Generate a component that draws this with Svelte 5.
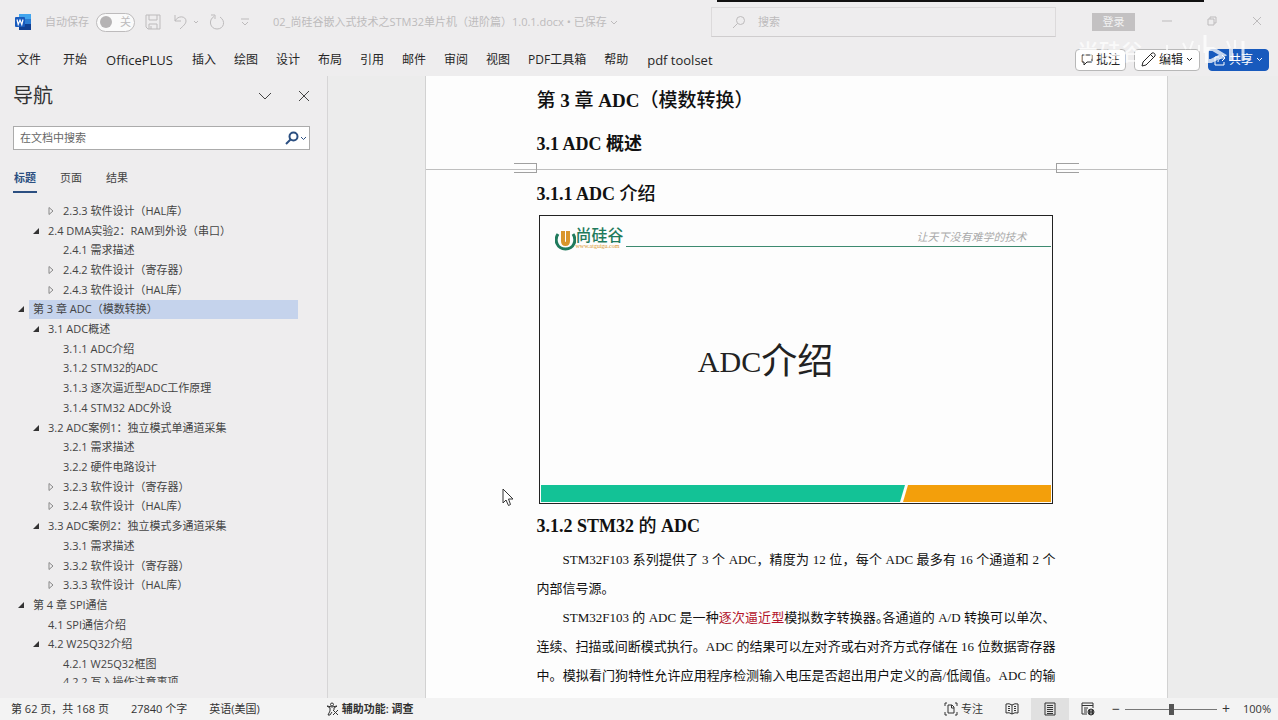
<script>
  let menus = ["开始", "OfficePLUS", "插入", "绘图", "设计", "布局", "引用", "邮件", "审阅", "视图", "PDF工具箱", "帮助", "pdf toolset"];
  let latin = ["OfficePLUS", "pdf toolset"];
  let tabs = ["标题", "页面", "结果"];
  let activeTab = "标题";
  let selected = "第 3 章 ADC（模数转换）";
  let autosave = false;
  let query = "";
  let find = "";
  let zoom = 50;

  // level is the depth in the outline, state is the arrow: open, shut or none
  let headings = [
    {level: 3, state: "shut", title: "2.3.3 软件设计（HAL库）"},
    {level: 2, state: "open", title: "2.4 DMA实验2：RAM到外设（串口）"},
    {level: 3, state: "", title: "2.4.1 需求描述"},
    {level: 3, state: "shut", title: "2.4.2 软件设计（寄存器）"},
    {level: 3, state: "shut", title: "2.4.3 软件设计（HAL库）"},
    {level: 1, state: "open", title: "第 3 章 ADC（模数转换）"},
    {level: 2, state: "open", title: "3.1 ADC概述"},
    {level: 3, state: "", title: "3.1.1 ADC介绍"},
    {level: 3, state: "", title: "3.1.2 STM32的ADC"},
    {level: 3, state: "", title: "3.1.3 逐次逼近型ADC工作原理"},
    {level: 3, state: "", title: "3.1.4 STM32 ADC外设"},
    {level: 2, state: "open", title: "3.2 ADC案例1：独立模式单通道采集"},
    {level: 3, state: "", title: "3.2.1 需求描述"},
    {level: 3, state: "", title: "3.2.2 硬件电路设计"},
    {level: 3, state: "shut", title: "3.2.3 软件设计（寄存器）"},
    {level: 3, state: "shut", title: "3.2.4 软件设计（HAL库）"},
    {level: 2, state: "open", title: "3.3 ADC案例2：独立模式多通道采集"},
    {level: 3, state: "", title: "3.3.1 需求描述"},
    {level: 3, state: "shut", title: "3.3.2 软件设计（寄存器）"},
    {level: 3, state: "shut", title: "3.3.3 软件设计（HAL库）"},
    {level: 1, state: "open", title: "第 4 章 SPI通信"},
    {level: 2, state: "", title: "4.1 SPI通信介绍"},
    {level: 2, state: "open", title: "4.2 W25Q32介绍"},
    {level: 3, state: "", title: "4.2.1 W25Q32框图"},
    {level: 3, state: "", title: "4.2.2 写入操作注意事项"}
  ];
</script>

<div class="app">
  <header class="titlebar">
    <svg class="word" width="16" height="16" viewBox="0 0 16 16">
      <rect x="4" y="0" width="12" height="16" rx="1" fill="#2b7cd3"/>
      <rect x="4" y="0" width="12" height="5" fill="#41a5ee"/>
      <rect x="4" y="10" width="12" height="6" fill="#103f91"/>
      <rect x="0" y="3" width="10" height="10" rx="1" fill="#185abd"/>
      <path d="M2 5.500l1.200 5L5 6l1.800 4.500L8 5.500" fill="none" stroke="#fff" stroke-width="1.200"/>
    </svg>
    <label class="autosave">
      自动保存
      <input type="checkbox" bind:checked={autosave}/>
      <span class="switch"><i></i>关</span>
    </label>
    <button class="qat save" aria-label="保存">
      <svg width="16" height="16" viewBox="0 0 16 16"><path d="M1 1h14v14H3l-2-2zM4 1v5h8V1M4 15v-5h8v5M6 15v-3"/></svg>
    </button>
    <button class="qat undo" aria-label="撤销">
      <svg width="26" height="16" viewBox="0 0 26 16"><path d="M2 1v6h6M2 7c3-6 11-5 11 0 0 3-3 5-6 8M21 7l2 2 2-2"/></svg>
    </button>
    <button class="qat redo" aria-label="重复">
      <svg width="16" height="16" viewBox="0 0 16 16"><path d="M2 1h4v4M5 2.500C-1 6 1 15 8 15s9-8 3-12"/></svg>
    </button>
    <button class="qat" aria-label="自定义">
      <svg width="8" height="8" viewBox="0 0 8 8"><path d="M0 1h8M1 4l3 3 3-3"/></svg>
    </button>
    <span class="filename">02_尚硅谷嵌入式技术之STM32单片机（进阶篇）1.0.1.docx • 已保存
      <svg width="8" height="6" viewBox="0 0 8 6"><path d="M1 1l3 3 3-3"/></svg>
    </span>
    <label class="search">
      <svg width="14" height="14" viewBox="0 0 14 14"><circle cx="8.500" cy="5.500" r="4"/><path d="M5.500 8.500L1 13"/></svg>
      <input placeholder="搜索" aria-label="搜索" bind:value={query}/>
    </label>
    <button class="login">登录</button>
    <div class="window">
      <button aria-label="最小化"><svg width="10" height="10" viewBox="0 0 10 10"><path d="M0 5h10"/></svg></button>
      <button aria-label="还原"><svg width="10" height="10" viewBox="0 0 10 10"><path d="M1 3h6v6H1zM3 3V1h6v6H7"/></svg></button>
      <button aria-label="关闭"><svg width="10" height="10" viewBox="0 0 10 10"><path d="M1 1l8 8M9 1L1 9"/></svg></button>
    </div>
    <div class="topline"></div>
  </header>

  <nav class="menubar">
    <button class="file">文件</button>
    {#each menus as menu}
      <button class:latin={latin.includes(menu)}>{menu}</button>
    {/each}
    <div class="actions">
      <button class="comment">
        <svg width="12" height="12" viewBox="0 0 12 12"><path d="M1 1h10v7H6l-3 3V8H1z"/></svg>批注
      </button>
      <button class="edit">
        <svg width="15" height="15" viewBox="0 0 15 15"><path d="M1 14l1-4 9-9q1.500-.5 2.500.5t.5 2.500l-9 9zM9.500 2.500l3 3"/></svg>编辑
        <svg width="7" height="5" viewBox="0 0 7 5"><path d="M1 1l2.500 2.500L6 1"/></svg>
      </button>
      <button class="share">
        <svg width="12" height="12" viewBox="0 0 12 12"><path d="M5 3H1v8h9V8M4 8c0-3 2-4 6-4M8 1l3 3-3 3"/></svg>共享
        <svg width="7" height="5" viewBox="0 0 7 5"><path d="M1 1l2.500 2.500L6 1"/></svg>
      </button>
      <div class="watermark">
        <span>尚硅谷</span>
        <svg width="88" height="32" viewBox="0 0 88 32">
          <path d="M6 10v14M22 8l3 6M32 6l-3 8M38 10v6M66 6l3 7M74 5v8"/>
          <path d="M44 0v18M82 6v20" stroke-width="3"/>
          <path d="M46 14h6l10 6-12 6h-4zM70 14v12" stroke-width="4"/>
        </svg>
      </div>
    </div>
  </nav>

  <main>
    <aside>
      <div class="panehead">
        <h2>导航</h2>
        <button aria-label="选项"><svg width="14" height="8" viewBox="0 0 14 8"><path d="M1 1l6 6 6-6"/></svg></button>
        <button aria-label="关闭窗格"><svg width="12" height="12" viewBox="0 0 12 12"><path d="M1 1l10 10M11 1L1 11"/></svg></button>
      </div>
      <label class="find">
        <input placeholder="在文档中搜索" aria-label="在文档中搜索" bind:value={find}/>
        <svg width="22" height="14" viewBox="0 0 22 14"><circle cx="8.500" cy="5.500" r="4" stroke-width="2"/><path d="M5.500 8.500L1 13" stroke-width="2"/><path d="M16 6l2.500 2.500L21 6"/></svg>
      </label>
      <div class="tabs">
        {#each tabs as tab}
          <button class:active={tab == activeTab} on:click={() => activeTab = tab}>{tab}</button>
        {/each}
      </div>
      <ul>
        {#each headings as item}
          <li class="level{item.level}">
            <svg width="8" height="8" viewBox="0 0 8 8">
              {#if item.state == "open"}
                <path class="open" d="M7 1v6H1z"/>
              {:else if item.state == "shut"}
                <path class="shut" d="M2 0.500v7l4-3.500z"/>
              {/if}
            </svg>
            <button class:selected={item.title == selected} on:click={() => selected = item.title}>{item.title}</button>
          </li>
        {/each}
      </ul>
    </aside>

    <section class="workspace">
      <article>
        <div class="sheet first">
          <h1><span>第</span> 3 <span>章</span> ADC<span>（模数转换）</span></h1>
          <h3>3.1 ADC 概述</h3>
          <i class="corner left"></i>
          <i class="corner right"></i>
        </div>
        <div class="sheet">
          <h3>3.1.1 ADC <span>介绍</span></h3>
          <div class="slide">
            <div class="slidehead">
              <svg width="21" height="21" viewBox="0 0 21 21">
                <path d="M3 4C-1 10 2 19 10.500 19S22 10 18 4" fill="none" stroke="#1f7a5c" stroke-width="3"/>
                <path d="M8 1v10q0 3 2.500 3t2.500-3V1" fill="none" stroke="#d9952b" stroke-width="4"/>
              </svg>
              <div class="brand">
                <b>尚硅谷</b>
                <small>www.atguigu.com</small>
              </div>
              <div class="rule">让天下没有难学的技术</div>
            </div>
            <p class="slidetitle">ADC<span>介绍</span></p>
            <svg class="band" viewBox="0 0 510 17" preserveAspectRatio="none">
              <path d="M0 0h364l-5 17H0z" fill="#13c296"/>
              <path d="M367 0h143v17H362z" fill="#f39f0b"/>
            </svg>
          </div>
          <h3>3.1.2 STM32 <span>的</span> ADC</h3>
          <p class="indent full">STM32F103 系列提供了 3 个 ADC，精度为 12 位，每个 ADC 最多有 16 个通道和 2 个</p>
          <p>内部信号源。</p>
          <p class="indent full">STM32F103 的 ADC 是一种<mark>逐次逼近型</mark>模拟数字转换器<span class="half">。</span>各通道的 A/D 转换可以单次、</p>
          <p class="full">连续、扫描或间断模式执行。ADC 的结果可以左对齐或右对齐方式存储在 16 位数据寄存器</p>
          <p class="full">中。模拟看门狗特性允许应用程序检测输入电压是否超出用户定义的高/低阈值。ADC 的输</p>
        </div>
      </article>
      <svg class="cursor" width="12" height="19" viewBox="0 0 12 19"><path d="M1 1v14l3-3 2.500 5.500 2-1L6.500 11H11z" fill="#fff" stroke="#333"/></svg>
    </section>
  </main>

  <footer>
    <span>第 62 页，共 168 页</span>
    <span>27840 个字</span>
    <span class="language">英语(美国)</span>
    <button class="access">
      <svg width="13" height="14" viewBox="0 0 13 14"><circle cx="6" cy="2.500" r="1.500"/><path d="M1 4l3 2v3l-2 4h2l2-3M11 4L8 6v2M7 8l5 5M12 8l-5 5M1 4q5 2 10 0"/></svg>辅助功能: 调查
    </button>
    <div class="views">
      <button class="focus">
        <svg width="14" height="14" viewBox="0 0 14 14"><path d="M3 1H1v3M11 1h2v3M1 10v3h2M13 10v3h-2M4 3h4l2 2v6H4zM7.500 3v3H10"/></svg>专注
      </button>
      <button class="view" aria-label="阅读视图"><svg width="14" height="12" viewBox="0 0 14 12"><path d="M7 2Q4 0 1 1v9q3-1 6 1 3-2 6-1V1Q10 0 7 2v9M3 3.500h2M3 5.500h2M3 7.500h2M9 3.500h2M9 5.500h2M9 7.500h2"/></svg></button>
      <button class="view current" aria-label="页面视图"><svg width="12" height="14" viewBox="0 0 12 14"><path d="M1 1h10v12H1zM3 3.500h6M3 5.500h6M3 7.500h6M3 9.500h6M3 11.500h6"/></svg></button>
      <button class="view" aria-label="Web 视图"><svg width="14" height="14" viewBox="0 0 14 14"><path d="M6 12H1V1h11v5M1 3.500h11M3 6h4M3 8h3M3 10h3"/><circle cx="10" cy="10" r="3"/><path d="M7 10h6M10 7v6M8.500 8v4M11.500 8v4"/></svg></button>
      <button class="step">−</button>
      <input type="range" aria-label="缩放" bind:value={zoom}/>
      <button class="step">+</button>
      <span class="percent">100%</span>
    </div>
  </footer>
</div>

<style>
  :global(body){
    margin: 0;
    background: #eeedee;
  }
  *, *::before, *::after{
    box-sizing: border-box;
  }
  .app{
    display: flex;
    flex-direction: column;
    height: 100vh;
    overflow: hidden;
    font: 12px/16px "Open Sans", "Noto Sans CJK SC", sans-serif;
    color: #333;
  }
  button, input{
    font: inherit;
    color: inherit;
    background: none;
    border: 0;
    padding: 0;
    margin: 0;
  }
  button{
    white-space: nowrap;
  }
  svg{
    flex: none;
    fill: none;
    stroke: currentColor;
  }
  .word, .slidehead svg, .band{
    stroke: none;
  }
  h1, h2, h3, p, ul{
    margin: 0;
    padding: 0;
  }

  .titlebar{
    position: relative;
    display: flex;
    align-items: center;
    flex: none;
    height: 44px;
    padding: 0 16px 0 15px;
    font-size: 11px;
    color: #bdbbbc;
  }
  .autosave{
    display: flex;
    align-items: center;
    gap: 7px;
    margin: 0 10px 0 14px;
  }
  .autosave input{
    position: absolute;
    opacity: 0;
  }
  .switch{
    display: flex;
    align-items: center;
    gap: 8px;
    width: 39px;
    height: 19px;
    padding: 0 3px;
    border: 1px solid #bdbbbc;
    border-radius: 10px;
    background: #fafafa;
  }
  .switch i{
    width: 12px;
    height: 12px;
    border-radius: 50%;
    background: #b5b3b4;
  }
  .qat{
    display: flex;
    margin-right: 24px;
  }
  .save{
    margin-right: 12px;
  }
  .undo{
    margin-right: 10px;
  }
  .redo{
    margin-right: 16px;
  }
  .filename{
    white-space: nowrap;
  }
  .search{
    display: flex;
    align-items: center;
    gap: 12px;
    width: 345px;
    height: 30px;
    margin-left: auto;
    padding: 0 20px;
    border: 1px solid #dcdadb;
    border-bottom-color: #cfcdce;
  }
  .search input{
    flex: 1;
  }
  ::placeholder{
    color: inherit;
    opacity: 1;
  }
  .login{
    width: 43px;
    height: 18px;
    margin: 0 27px 0 36px;
    background: #c3c1c2;
    color: #f2f2f2;
  }
  .window{
    display: flex;
    gap: 35px;
  }
  .topline{
    position: absolute;
    top: 0;
    right: 74px;
    width: 487px;
    height: 2px;
    background: #111;
  }

  .menubar{
    display: flex;
    align-items: center;
    flex: none;
    gap: 18px;
    height: 32px;
    padding: 0 9px 1px 17px;
    color: #262626;
  }
  .file{
    margin-right: 4px;
  }
  .latin{
    margin: 0 1px;
    font-size: 13px;
  }
  .actions{
    position: relative;
    display: flex;
    gap: 8px;
    margin-left: auto;
  }
  .actions button{
    display: flex;
    align-items: center;
    justify-content: center;
    gap: 3px;
    height: 22px;
    border: 1px solid #b8b8b8;
    border-radius: 4px;
    background: #fff;
  }
  .comment{
    width: 51px;
  }
  .edit{
    width: 66px;
  }
  .actions .share{
    width: 61px;
    border-color: #185abd;
    background: #185abd;
    color: #fff;
  }
  .watermark{
    position: absolute;
    top: -14px;
    left: 2px;
    display: flex;
    align-items: center;
    font-size: 22px;
    font-weight: 500;
    line-height: 28px;
    color: #fff;
    opacity: .75;
    pointer-events: none;
  }
  .watermark svg{
    margin-left: 18px;
    stroke-width: 2;
  }

  main{
    display: flex;
    flex: 1;
    min-height: 0;
  }
  aside{
    display: flex;
    flex-direction: column;
    width: 328px;
    padding: 8px 17px 15px 13px;
    border-right: 1px solid #d6d5d6;
    font-size: 11px;
    color: #444;
  }
  .panehead{
    display: flex;
    align-items: center;
    gap: 26px;
    height: 28px;
    padding-bottom: 4px;
  }
  .panehead h2{
    flex: 1;
    font-size: 20px;
    font-weight: 400;
    line-height: 28px;
    color: #333;
  }
  .panehead button{
    display: flex;
    height: 20px;
    align-items: center;
  }
  .find{
    display: flex;
    align-items: center;
    height: 24px;
    margin-top: 14px;
    padding: 0 2px 0 6px;
    border: 1px solid #ababab;
    background: #fff;
    color: #666;
  }
  .find input{
    flex: 1;
    min-width: 0;
  }
  .find svg{
    color: #2b4f81;
  }
  .tabs{
    display: flex;
    gap: 22px;
    margin: 17px 0 8px;
  }
  .tabs button{
    padding: 3px 1px 5px;
    border-bottom: 2px solid transparent;
  }
  .tabs .active{
    border-color: #2b4f81;
    color: #2b4f81;
    font-weight: 600;
  }
  ul{
    display: flex;
    flex: 1;
    flex-direction: column;
    min-height: 0;
    overflow: hidden;
    list-style: none;
  }
  li{
    display: flex;
    flex: 1;
    align-items: center;
    gap: 4px;
    padding: 0 12px 0 4px;
  }
  li:last-child{
    flex: 0 0 9px;
    align-items: flex-start;
    overflow: hidden;
  }
  .level2{
    padding-left: 19px;
  }
  .level3{
    padding-left: 34px;
  }
  li button{
    flex: 1;
    align-self: stretch;
    padding-left: 4px;
    text-align: left;
  }
  .selected{
    background: #c5d3ec;
  }
  .open{
    fill: #333;
    stroke: none;
  }
  .shut{
    stroke: #888;
  }

  .workspace{
    position: relative;
    display: flex;
    flex: 1;
    justify-content: center;
    padding-right: 14px;
    overflow: hidden;
    background: #ececec;
  }
  article{
    width: 743px;
    border: 1px solid #d2d2d2;
    border-width: 0 1px;
    background: #fdfdfd;
    font-family: "Liberation Serif", "Noto Sans CJK SC", serif;
    color: #111;
  }
  .sheet{
    padding: 12px 111px 0;
  }
  .first{
    position: relative;
    padding-top: 9px;
    padding-bottom: 13px;
    border-bottom: 1px solid #bfbfbf;
  }
  h1{
    margin-bottom: 15px;
    font-size: 19px;
    line-height: 32px;
  }
  h3{
    font-size: 18px;
    line-height: 24px;
  }
  h1 span, h3 span{
    font-weight: 500;
  }
  .corner{
    position: absolute;
    bottom: -4px;
    width: 23px;
    height: 10px;
    border: 1px solid #a0a0a0;
  }
  .left{
    left: 88px;
    border-left: 0;
  }
  .right{
    right: 88px;
    border-right: 0;
  }
  .slide{
    display: flex;
    flex-direction: column;
    aspect-ratio: 16 / 9;
    margin: 9px 3px 10px 2px;
    padding: 1px;
    border: 1px solid #222;
  }
  .slidehead{
    display: flex;
    align-items: flex-end;
    padding: 11px 0 0 14px;
  }
  .brand{
    display: flex;
    flex-direction: column;
    width: 50px;
    padding-bottom: 2px;
    color: #1f7a5c;
  }
  .brand b{
    font-size: 16px;
    font-weight: 500;
    line-height: 14px;
  }
  .brand small{
    font-size: 6px;
    line-height: 6px;
    color: #d9952b;
  }
  .rule{
    flex: 1;
    height: 20px;
    margin-bottom: 4px;
    padding-right: 24px;
    border-bottom: 1px solid #3d8a70;
    text-align: right;
    font-size: 11px;
    font-style: italic;
    line-height: 20px;
    color: #aaa;
  }
  .slidetitle{
    display: flex;
    flex: 1;
    align-items: center;
    justify-content: center;
    padding: 0 60px 12px 0;
    font-size: 30px;
    line-height: 40px;
  }
  .slidetitle span{
    font-size: 36px;
  }
  .slidehead + .slidetitle{
    color: #222;
  }
  .slidehead{
    padding-top: 10px;
  }
  .band{
    width: 100%;
    height: 17px;
  }
  .sheet > p{
    font-size: 13px;
    line-height: 29px;
    white-space: nowrap;
  }
  .sheet > h3 + p{
    margin-top: 7px;
  }
  .sheet > .full{
    text-align: justify;
    text-align-last: justify;
    white-space: normal;
  }
  .sheet > .indent{
    text-indent: 26px;
  }
  .half{
    font-feature-settings: "halt";
  }
  mark{
    background: none;
    color: #b3142b;
  }
  .cursor{
    position: absolute;
    top: 412px;
    left: 174px;
  }

  footer{
    display: flex;
    align-items: center;
    flex: none;
    gap: 22px;
    height: 22px;
    padding: 0 7px 0 11px;
    background: #f3f3f3;
    font-size: 11px;
    white-space: nowrap;
  }
  footer button{
    display: flex;
    align-items: center;
    justify-content: center;
    gap: 3px;
  }
  .language{
    margin-right: 44px;
  }
  .access{
    font-weight: 600;
  }
  .views{
    display: flex;
    align-items: center;
    margin-left: auto;
  }
  .focus{
    margin-right: 10px;
  }
  .view{
    width: 38px;
    height: 22px;
  }
  .current{
    background: #e0e0e0;
  }
  .step{
    width: 10px;
    margin: 0 4px;
    font-size: 14px;
  }
  .percent{
    margin-left: 8px;
  }
  .views input{
    appearance: none;
    width: 92px;
    height: 12px;
    background: linear-gradient(#777, #777) center / 100% 1px no-repeat;
  }
  input::-webkit-slider-thumb{
    appearance: none;
    width: 5px;
    height: 11px;
    background: #555;
  }
</style>
